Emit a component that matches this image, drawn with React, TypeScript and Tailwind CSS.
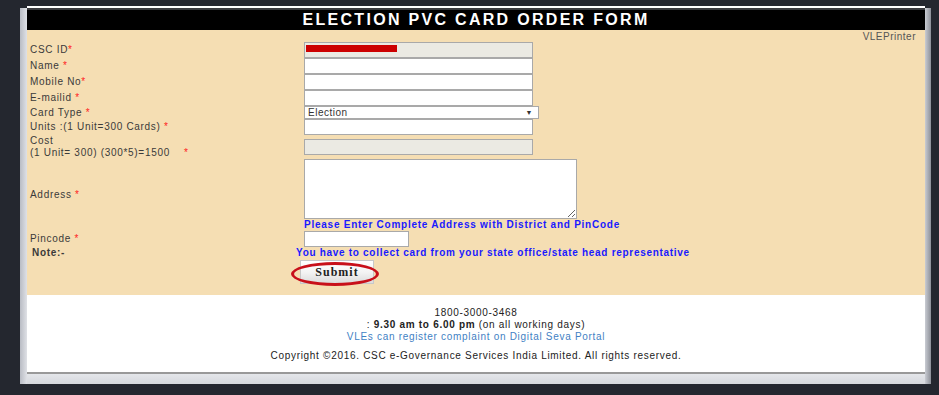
import React from 'react'

const Req = ({ sp = '' }: { sp?: string }) => <span className="text-[#f22]">{sp}*</span>

function Row({ label, children, h, lw = 'w-[277px]' }: { label: React.ReactNode; children: React.ReactNode; h?: string; lw?: string }) {
  return (
    <div className={`flex items-center ${h ?? ''}`}>
      <div className={`${lw} shrink-0 pl-[3px] text-[10px] leading-[12px] tracking-[0.7px] text-[#3a3a3a]`}>{label}</div>
      <div>{children}</div>
    </div>
  )
}

const Input = ({ w = 'w-[229px]', gray = false }: { w?: string; gray?: boolean }) => (
  <div className={`${w} h-[16px] border border-[#a9a9a9] ${gray ? 'bg-[#ebeae3]' : 'bg-white'}`} />
)

export default function App() {
  return (
    <div className="h-[395px] w-[939px] overflow-hidden bg-[#24272f] pt-[6px] pl-[20px] font-['Liberation_Sans',Arial,sans-serif]">
      <div className="flex">
        <div className="mt-[2px] h-[376px] w-[7px] bg-gradient-to-r from-[#b9bcc4] to-[#dfe1e6]" />
        <div className="w-[898px]">
          <div className="h-[2px] bg-white" />
          <div className="h-[2px] bg-[#3a3b3f]" />
          <div className="flex h-[20px] items-center justify-center bg-black text-[16px] font-bold tracking-[2.3px] text-white">
            ELECTION PVC CARD ORDER FORM
          </div>

          <div className="relative h-[265px] bg-[#f5deb3]">
            <div className="h-[12px] pr-[9px] pt-[1px] text-right text-[10px] leading-[11px] tracking-[0.5px] text-[#555]">VLEPrinter</div>
            <Row label={<>CSC ID<Req /></>}>
              <div className="h-[16px] w-[229px] border border-[#a9a9a9] bg-[#ebeae3] pl-[1px] pt-[2px]">
                <div className="h-[7px] w-[91px] bg-[#cc0000]" />
              </div>
            </Row>
            <Row label={<>Name <Req /></>}><Input /></Row>
            <Row label={<>Mobile No<Req /></>}><Input /></Row>
            <Row label={<>E-mailid <Req /></>}><Input /></Row>
            <Row label={<>Card Type <Req /></>}>
              <div className="flex h-[13px] w-[235px] items-center justify-between border border-[#a9a9a9] bg-white pl-[3px] pr-[5px] text-[10px] leading-[10px] tracking-[0.5px] text-[#333]">
                <span>Election</span>
                <span className="text-[7px]">▼</span>
              </div>
            </Row>
            <Row label={<>Units :(1 Unit=300 Cards) <Req /></>}><Input /></Row>
            <div className="flex items-center">
              <div className="w-[277px] shrink-0 pl-[3px] text-[10px] leading-[12px] tracking-[0.7px] text-[#3a3a3a]">
                <div>Cost</div>
                <div>(1 Unit= 300) (300*5)=1500 &nbsp;&nbsp; <Req /></div>
              </div>
              <Input gray />
            </div>
            <div className="flex items-center">
              <div className="w-[277px] shrink-0 pl-[3px] text-[10px] leading-[12px] tracking-[0.7px] text-[#3a3a3a]">
                Address <Req />
              </div>
              <div>
                <textarea className="block h-[60px] w-[273px] resize border border-[#a9a9a9] bg-white" />
                <div className="text-[10px] font-bold leading-[12px] tracking-[0.75px] text-[#1a1aff]">
                  Please Enter Complete Address with District and PinCode
                </div>
              </div>
            </div>
            <Row label={<>Pincode <Req /></>}><Input w="w-[105px]" /></Row>
            <div className="flex h-[12px] items-center text-[10px] font-bold leading-[12px]">
              <div className="w-[269px] shrink-0 pl-[5px] tracking-[0.7px] text-[#3a3a3a]">Note:-</div>
              <div className="tracking-[0.7px] text-[#1a1aff]">You have to collect card from your state office/state head representative</div>
            </div>
            <div className="pl-[273px]">
              <button className="h-[24px] w-[74px] border border-[#c8c8c8] bg-gradient-to-b from-white via-[#f4f4f4] to-[#dcdcdc] font-['Liberation_Serif',serif] text-[12px] font-bold tracking-[1px] text-[#222]">
                Submit
              </button>
            </div>
            <div className="absolute left-[264px] top-[232px] h-[24px] w-[88px] rounded-[50%] border-[3px] border-[#c8101a]" />
          </div>

          <div className="h-[77px] bg-white pt-[12px] text-center text-[10px] leading-[12px] tracking-[0.7px] text-[#222]">
            <div>1800-3000-3468</div>
            <div>: <b>9.30 am to 6.00 pm</b> (on all working days)</div>
            <div className="text-[#3f7fc4]">VLEs can register complaint on Digital Seva Portal</div>
            <div className="mt-[7px]">Copyright ©2016. CSC e-Governance Services India Limited. All rights reserved.</div>
          </div>
          <div className="h-[2px] bg-[#999]" />
          <div className="h-[10px] bg-gradient-to-b from-[#e4e6ea] to-[#d6d8dd]" />
        </div>
        <div className="mt-[2px] h-[376px] w-[6px] bg-gradient-to-r from-[#c9ccd3] to-[#8d9098]" />
      </div>
    </div>
  )
}
